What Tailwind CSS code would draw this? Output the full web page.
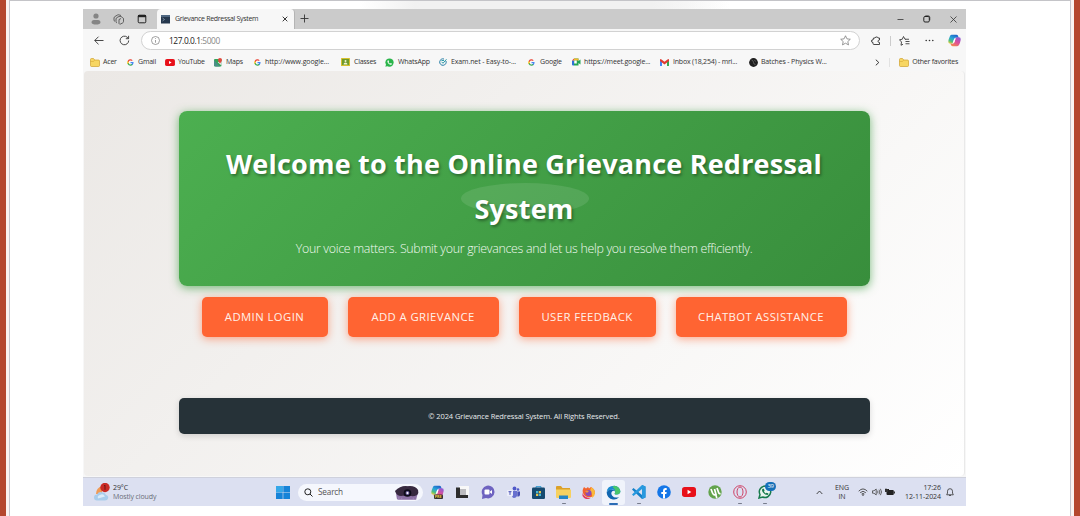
<!DOCTYPE html>
<html lang="en">
<head>
<meta charset="utf-8">
<title>Grievance Redressal System</title>
<script src="https://cdn.jsdelivr.net/npm/@tailwindcss/browser@4"></script>
</head>
<body class="w-[1080px] h-[516px] overflow-hidden bg-white font-['Open_Sans','Noto_Sans',sans-serif] text-[#333]">
<svg class="absolute w-0 h-0">
  <linearGradient id="cool" x1="0.700" y1="0" x2="0.200" y2="1"><stop offset="0" stop-color="#1f63c9"/><stop offset=".45" stop-color="#2aa6d8"/><stop offset=".75" stop-color="#4fbf7d"/><stop offset="1" stop-color="#e8cf3c"/></linearGradient>
  <linearGradient id="warm" x1="0.800" y1="0" x2="0.200" y2="1"><stop offset="0" stop-color="#8d5bd6"/><stop offset=".5" stop-color="#dd4f9b"/><stop offset="1" stop-color="#f58a4a"/></linearGradient>
  <symbol id="g" viewBox="0 0 24 24"><path fill="#4285f4" d="M22.5 12.3c0-.8-.1-1.6-.2-2.3H12v4.3h5.9a5 5 0 0 1-2.2 3.3v2.8h3.6c2-2 3.2-4.800 3.200-8.100z"/><path fill="#34a853" d="M12 23c3 0 5.500-1 7.300-2.700l-3.600-2.800a6.600 6.600 0 0 1-9.900-3.400H2.200v2.800A11 11 0 0 0 12 23z"/><path fill="#fbbc05" d="M5.800 14.100a6.600 6.600 0 0 1 0-4.200V7.100H2.200a11 11 0 0 0 0 9.800z"/><path fill="#ea4335" d="M12 5.400c1.600 0 3.100.6 4.200 1.600l3.200-3.100A11 11 0 0 0 2.200 7.100l3.600 2.800A6.600 6.600 0 0 1 12 5.400z"/></symbol>
  <symbol id="folder" viewBox="0 0 20 18"><path fill="#f7d662" stroke="#d0a02c" stroke-width="1.400" d="M1 3q0-2 2-2h4l2.500 3H17q2 0 2 2v9q0 2-2 2H3q-2 0-2-2z"/><path stroke="#d0a02c" stroke-width="1" fill="none" d="M1 7h6l2.500-3"/></symbol>
  <symbol id="yt" viewBox="0 0 24 17"><rect width="24" height="17" rx="4.500" fill="#e8101a"/><path fill="#fff" d="M9.500 4.800v7.400l6.500-3.700z"/></symbol>
  <symbol id="wa" viewBox="0 0 24 24"><circle cx="12" cy="12" r="11" fill="#2ab54a"/><path fill="#2ab54a" d="M1 23l2-7 5 5z"/><path fill="#fff" d="M8 6c-3 2-1.500 6 1.500 9s7 4 8.500 1.500c.8-1.500-.2-2-2.800-3.200L13.500 15c-2-.8-3.400-2.400-4-4l1.200-1.600C9.800 6.500 9.200 5.500 8 6z"/></symbol>
  <symbol id="copilot" viewBox="0 0 24 24"><path fill="url(#cool)" d="M7 1.500h8.500q2.500 0 3.300 2.500l.9 3H14q-2 0-2.700 2L9 15.500q-.8 2.500-3.500 2.500H4q-4 0-3.500-4.500Q1.500 8 3.500 4 4.500 1.500 7 1.500z"/><path fill="url(#warm)" d="M17 22.500H8.500q-2.500 0-3.300-2.500l-.5-2H8q2.500 0 3.300-2.500L14 8.500Q14.800 6 17.500 6H20q4 0 3.500 4.500-1 5.500-3 9.500-1 2.500-3.500 2.500z"/><path fill="#fff" d="M11.300 9h2.400l-1.900 6.500H9.300z"/></symbol>
</svg>

<div class="relative flex w-[1080px] h-[516px] justify-between">
  <div class="flex w-[10px]"><div class="w-[6px] bg-[#b5472e]"></div><div class="w-[3px] bg-[#fbf3f1]"></div><div class="w-px bg-[#c6c6cc]"></div></div>

  <div class="flex-1 border-t border-[#c4c4c8] pt-2 pl-[73px] bg-white">
    <div class="absolute left-[360px] top-[1px] w-[370px] h-[8px] bg-linear-to-r from-transparent from-0% via-[#f1f1f1] via-15% to-transparent"></div>
    <div class="absolute left-[420px] top-[1px] w-[310px] h-[8px] bg-linear-to-r from-[#f1f1f1] from-75% to-transparent"></div>
    <main class="relative w-[883px] h-[497px] flex flex-col bg-[#f7f7f7]">

      <!-- Tab strip -->
      <div class="flex h-[20px] bg-[#cbcbcb]">
        <div class="flex w-[74px] items-center pl-[8px] gap-[12px]">
          <svg class="w-[10px] h-[12px]" viewBox="0 0 10 12" fill="#858585"><circle cx="5" cy="3" r="2.600"/><path d="M.5 11.500V9.500q0-2.500 2.500-2.500h4q2.500 0 2.500 2.500-.5 2-4.500 2T.5 9.500z"/></svg>
          <svg class="w-[11px] h-[11px]" viewBox="0 0 22 22" fill="none" stroke="#444" stroke-width="1.600" stroke-linejoin="round"><path d="M4 15q-2-1-2-3V8q0-2 2-3l5-3q2-1 4 0l3 1"/><path d="M8 18q-2-1-2-3V10q0-2 2-3l4-2q2-1 4 0l3 2q2 1 2 3v5q0 2-2 3l-4 2q-2 1-3-1v-8l4-2"/></svg>
          <svg class="w-[10px] h-[10px] ml-[1px]" viewBox="0 0 10 10"><rect x="1.200" y="1.200" width="7.600" height="7.600" rx="1" fill="none" stroke="#222" stroke-width="1"/><path d="M1 1h8v2.200H1z" fill="#222"/></svg>
        </div>
        <div class="flex w-[138px] items-center rounded-t-[4px] bg-[#f7f7f7] border-r border-[#b4b4b4] pl-[4px]">
          <svg class="w-[9px] h-[9px]" viewBox="0 0 9 9"><rect width="9" height="8.500" fill="#26384e"/><path d="M0 1h9" stroke="#7896b4"/><path d="M1.500 3l2 1.500-2 1.500" stroke="#9ab" stroke-width=".7" fill="none"/></svg>
          <span class="ml-[5px] w-[107px] text-[7px] tracking-[-0.320px] whitespace-nowrap">Grievance Redressal System</span>
          <svg class="w-[6px] h-[6px]" viewBox="0 0 6 6" stroke="#222" stroke-width=".9"><path d="M.7.7l4.600 4.600M5.300.7L.7 5.300"/></svg>
        </div>
        <svg class="w-[9px] h-[9px] ml-[5px] mt-[5px]" viewBox="0 0 9 9" stroke="#333" stroke-width=".9"><path d="M4.500.5v8M.5 4.500h8"/></svg>
        <div class="ml-auto flex items-center pr-[9px]">
          <svg class="w-[7px] h-[7px]" viewBox="0 0 7 7" stroke="#444" stroke-width=".9"><path d="M.5 3.500h6"/></svg>
          <svg class="w-[8px] h-[8px] ml-[19px]" viewBox="0 0 8 8" stroke="#222" fill="none"><rect x=".8" y="1.500" width="5.500" height="5.500" rx="1.200"/><path d="M2.300.8h3q1.500 0 1.500 1.500v3" stroke-width=".7"/></svg>
          <svg class="w-[7px] h-[7px] ml-[19px]" viewBox="0 0 7 7" stroke="#333" stroke-width=".8"><path d="M.5.5l6 6M6.500.5l-6 6"/></svg>
        </div>
      </div>

      <!-- Address bar -->
      <div class="flex h-[23px] items-center pl-[11px]">
        <svg class="w-[10px] h-[9px]" viewBox="0 0 10 9" stroke="#333" fill="none" stroke-width=".9"><path d="M9.500 4.500H.8M4.500.7L.7 4.500l3.800 3.800"/></svg>
        <svg class="w-[11px] h-[11px] ml-[15px]" viewBox="0 0 11 11" stroke="#333" fill="none" stroke-width=".9"><path d="M9.700 5.500a4.300 4.300 0 1 1-1.500-3.300L9.500 3.500M9.600.8v2.900H6.800"/></svg>
        <div class="ml-[11px] flex h-[19px] w-[719px] items-center rounded-full border border-[#d2d2d2] bg-white pl-[9px] pr-[8px]">
          <svg class="w-[9px] h-[9px]" viewBox="0 0 9 9" fill="none" stroke="#777" stroke-width=".7"><circle cx="4.500" cy="4.500" r="4"/><path d="M4.500 4v2.700M4.500 2.200v.8"/></svg>
          <span class="ml-[9px] pt-px text-[8.400px] tracking-[-0.420px] text-[#222]">127.0.0.1<span class="text-[#888]">:5000</span></span>
          <svg class="ml-auto w-[11px] h-[11px]" viewBox="0 0 22 22" fill="none" stroke="#777" stroke-width="1.500"><path d="M11 1.500l2.900 6.200 6.700.8-5 4.600 1.400 6.700-6-3.400-6 3.400 1.400-6.700-5-4.600 6.700-.8z"/></svg>
        </div>
        <svg class="ml-[11px] w-[10px] h-[10px]" viewBox="0 0 20 20" fill="none" stroke="#333" stroke-width="1.800" stroke-linejoin="round"><path d="M5 4h3q1-3 4-2 2 .5 2 2h3v4q-3 0-3 2.500t3 2.500v4H6q-2 0-2-2v-2q-3 0-3-3t3-2z"/></svg>
        <div class="ml-[9px] w-px h-[10px] bg-[#ccc]"></div>
        <svg class="ml-[8px] w-[11px] h-[10px]" viewBox="0 0 22 20" fill="none" stroke="#333" stroke-width="1.700" stroke-linejoin="round"><path d="M14 6.500h-2L9 1 6.500 6.500l-5.500 1L5 12l-1 6.500 4-2M13 6.500h7M13 11h8M13 15.500h8"/></svg>
        <svg class="ml-[15px] w-[9px] h-[3px]" viewBox="0 0 9 3" fill="#333"><circle cx="1.200" cy="1.500" r=".8"/><circle cx="4.500" cy="1.500" r=".8"/><circle cx="7.800" cy="1.500" r=".8"/></svg>
        <svg class="ml-[14px] w-[13px] h-[13px]"><use href="#copilot"/></svg>
      </div>

      <!-- Favourites bar -->
      <div class="flex h-[19px] items-center pl-[7px] pt-px text-[7px] tracking-[-0.200px] whitespace-nowrap">
        <div class="flex w-[37px] items-center gap-[3px]"><svg class="w-[10px] h-[9px]"><use href="#folder"/></svg><span>Acer</span></div>
        <div class="flex w-[38px] items-center gap-[4px]"><svg class="w-[7px] h-[7px]"><use href="#g"/></svg><span>Gmail</span></div>
        <div class="flex w-[49px] items-center gap-[3px]"><svg class="w-[10px] h-[7px]"><use href="#yt"/></svg><span class="tracking-[-0.300px]">YouTube</span></div>
        <div class="flex w-[40px] items-center gap-[4px]"><svg class="w-[8px] h-[9px]" viewBox="0 0 16 18"><rect y="2" width="15" height="15" rx="2" fill="#35a35a"/><path d="M1 16L13 4l2 2v9L8 9z" fill="#e7ecee"/><path d="M0 4l12 13H4q-4 0-4-4z" fill="#4c8e88"/><path d="M12 0a4 4 0 0 0-4 4q0 2 4 7 4-5 4-7a4 4 0 0 0-4-4z" fill="#df4a3e"/></svg><span>Maps</span></div>
        <div class="flex w-[87px] items-center gap-[4px]"><svg class="w-[7px] h-[7px]"><use href="#g"/></svg><span class="tracking-[-0.090px]">http://www.google...</span></div>
        <div class="flex w-[44px] items-center gap-[4px]"><svg class="w-[9px] h-[8px]" viewBox="0 0 18 16"><rect width="18" height="16" rx="1" fill="#d6c02e"/><rect x="2" y="2" width="14" height="12" fill="#6f9a2c"/><path fill="#f0f3cf" d="M9 4a2 2 0 1 1 0 4 2 2 0 0 1 0-4zM5 13q0-4 4-4t4 4z"/></svg><span class="tracking-[-0.260px]">Classes</span></div>
        <div class="flex w-[54px] items-center gap-[4px]"><svg class="w-[9px] h-[9px]"><use href="#wa"/></svg><span>WhatsApp</span></div>
        <div class="flex w-[89px] items-center gap-[4px]"><svg class="w-[8px] h-[8px]" viewBox="0 0 16 16" fill="none" stroke-width="2"><path stroke="#247ca4" d="M14 6a6.500 6.500 0 1 1-4-4"/><path stroke="#2a9ba8" d="M5 7.500l3 3 7-8M5 5h5"/></svg><span class="tracking-[-0.120px]">Exam.net - Easy-to-...</span></div>
        <div class="flex w-[44px] items-center gap-[5px]"><svg class="w-[7px] h-[7px]"><use href="#g"/></svg><span>Google</span></div>
        <div class="flex w-[88px] items-center gap-[3px]"><svg class="w-[9px] h-[8px]" viewBox="0 0 18 16"><path fill="#23a455" d="M4 1h9v5l4-3v10l-4-3v5H4z"/><path fill="#f4b92c" d="M4 1h9v4H4z"/><path fill="#2d70d8" d="M0 5h4v10H2q-2 0-2-2z"/><path fill="#e44235" d="M0 5l4-4v4z"/><path fill="#fff" d="M4.500 5h5v6h-5z"/></svg><span class="tracking-[-0.160px]">https://meet.google...</span></div>
        <div class="flex w-[89px] items-center gap-[4px]"><svg class="w-[9px] h-[7px]" viewBox="0 0 18 14"><path fill="#4285f4" d="M0 2h4v12H1q-1 0-1-1z"/><path fill="#34a853" d="M14 2h4v11q0 1-1 1h-3z"/><path fill="#e03a32" d="M0 1q1-2 3 0l6 4.500L15 1q2-2 3 0v3L9 11 0 4z"/></svg><span>Inbox (18,254) - mri...</span></div>
        <div class="flex items-center gap-[3px]"><svg class="w-[9px] h-[9px]" viewBox="0 0 18 18"><circle cx="9" cy="9" r="8.800" fill="#202020"/><path d="M5 4q4 1 4 5t4 4M11 4l2 3" stroke="#777" fill="none" stroke-width="1.300"/></svg><span class="tracking-[-0.160px]">Batches - Physics W...</span></div>
        <div class="ml-auto flex items-center pr-[8px]">
          <svg class="w-[5px] h-[7px]" viewBox="0 0 5 7" fill="none" stroke="#222" stroke-width=".9"><path d="M.8.700l3 2.800-3 2.800"/></svg>
          <div class="ml-[9px] mr-[9px] w-px h-[9px] bg-[#e2e2e2]"></div>
          <svg class="w-[10px] h-[9px] mr-[3px]"><use href="#folder"/></svg><span class="tracking-[-0.230px]">Other favorites</span>
        </div>
      </div>

      <!-- Page -->
      <section class="mx-px flex h-[405px] flex-col items-center rounded-[4px] border-r border-[#e9e9e9] bg-linear-135 from-[#ebe8e5] to-[#ffffff] pt-[40px]">
        <header class="relative flex h-[175px] w-[691px] flex-col items-center rounded-[8px] bg-linear-135 from-[#4caf50] to-[#388e3c] pt-[31px] text-center shadow-[0_2px_10px_rgba(67,160,71,0.700)]">
          <div class="absolute left-[282px] top-[72px] h-[31px] w-[128px] rounded-[50%] bg-white/10"></div>
          <h1 class="relative text-[27px] leading-[44.800px] font-bold tracking-[0.210px] text-white [text-shadow:1.500px_1.500px_3px_rgba(0,0,0,0.350)]">Welcome to the Online Grievance Redressal<br>System</h1>
          <p class="relative mt-[7px] text-[12.400px] leading-[20px] font-light tracking-[-0.300px] text-[#f0faf0]">Your voice matters. Submit your grievances and let us help you resolve them efficiently.</p>
        </header>
        <nav class="mt-[11px] flex h-[40px] gap-[20px] text-[11.300px] text-[#fff1e9] tracking-[0.420px] *:pt-px">
          <a class="flex w-[126px] items-center justify-center rounded-[5px] bg-[#ff6432] shadow-[0_2px_8px_rgba(255,87,34,0.500)]">ADMIN LOGIN</a>
          <a class="flex w-[151px] items-center justify-center rounded-[5px] bg-[#ff6432] shadow-[0_2px_8px_rgba(255,87,34,0.500)]">ADD A GRIEVANCE</a>
          <a class="flex w-[137px] items-center justify-center rounded-[5px] bg-[#ff6432] shadow-[0_2px_8px_rgba(255,87,34,0.500)]">USER FEEDBACK</a>
          <a class="flex w-[171px] items-center justify-center rounded-[5px] bg-[#ff6432] shadow-[0_2px_8px_rgba(255,87,34,0.500)]">CHATBOT ASSISTANCE</a>
        </nav>
        <footer class="mt-[61px] flex h-[36px] w-[691px] items-center justify-center rounded-[5px] bg-[#263238] pt-px text-[7.500px] tracking-[-0.110px] text-[#e6eaec] shadow-[0_2px_6px_rgba(0,0,0,0.150)]">© 2024 Grievance Redressal System. All Rights Reserved.</footer>
      </section>

      <!-- Taskbar -->
      <div class="mt-auto flex h-[29px] items-center border-t border-[#cfd1dc] bg-[#dce0f1] text-[7px] text-[#333]">
        <svg class="ml-[11px] w-[17px] h-[19px]" viewBox="0 0 17 19"><path fill="#f09a55" d="M2 11q0-6 6-8v8z"/><path fill="#a9cdec" d="M3 17.500a3 3 0 0 1 0-6q2-3.500 5.500-2Q11 9 12 12q3 1 2 3.500-.5 2-3 2z"/><path fill="#dcecf9" d="M4 15.500q-1-3 2-3.500 3-2 5 1.500z"/><circle cx="11" cy="4.500" r="4.700" fill="#c92a26"/><path d="M10 3l1-.8v4.600" stroke="#6d1512" fill="none"/></svg>
        <div class="ml-[2px] w-[163px] leading-[9.500px] tracking-[-0.120px]"><div>29°C</div><div class="text-[#6a6d78]">Mostly cloudy</div></div>
        <svg class="w-[14px] h-[13px]" viewBox="0 0 14 13"><path fill="#1683d8" d="M0 0h6.700v6.200H0zM7.300 0H14v6.200H7.300zM0 6.800h6.700V13H0zM7.300 6.800H14V13H7.300z"/><path fill="#35a7e8" d="M0 0h6.700v6.200H0z"/></svg>
        <div class="ml-[8px] flex h-[17px] w-[125px] items-center rounded-full bg-[#f5f7fd] pl-[6px] pr-[3px]">
          <svg class="w-[9px] h-[9px]" viewBox="0 0 9 9" fill="none" stroke="#222" stroke-width="1"><circle cx="3.800" cy="3.800" r="3"/><path d="M6 6l2.500 2.500"/></svg>
          <span class="ml-[5px] pt-px text-[8.200px] tracking-[-0.160px] text-[#555]">Search</span>
          <svg class="ml-auto w-[26px] h-[15px]" viewBox="0 0 27 15"><path fill="#8d72a5" d="M3 14L2 8Q5 1 13 1t12 6l-2 8H4z"/><path fill="#37293f" d="M1 6q6-6 13-5 8-1 11 4 1 3-1 5-4 2-7 1H9Q3 12 1 6z"/><circle cx="14" cy="8" r="4" fill="#0f0d1a"/><circle cx="14" cy="8" r="2" fill="#7567a6"/><circle cx="14" cy="8" r="1" fill="#fff"/><path stroke="#b398c8" stroke-width=".6" d="M5 12v3M8 13v2M20 13v2"/></svg>
        </div>
        <div class="ml-[2px] flex h-full items-center">
          <div class="flex w-[25px] justify-center"><svg class="w-[15px] h-[15px]" viewBox="0 0 15 15"><use href="#copilot" x="1" width="13" height="13"/><rect x="4" y="9.500" width="9" height="4.500" rx="1" fill="#333"/><text x="4.700" y="13.200" font-size="3.800" font-weight="bold" fill="#f5c542">PRE</text></svg></div>
          <div class="flex w-[25px] justify-center"><svg class="w-[13px] h-[13px]" viewBox="0 0 13 13"><path fill="#f8f8f8" d="M3 0h10v9H3z"/><path fill="#bcbcc0" d="M4 3h6v6H4z"/><path fill="#2d2d2d" d="M0 1.500h4V9h8v3H0z"/></svg></div>
          <div class="flex w-[25px] justify-center"><svg class="w-[14px] h-[14px]" viewBox="0 0 14 14"><path fill="#6e63c0" d="M1 14l.5-4A6.400 6.400 0 1 1 5 13z"/><rect x="3.500" y="4.500" width="5" height="5" rx="1" fill="#fff"/><path fill="#fff" d="M9 6.500l2-1.500v4L9 7.500z"/></svg></div>
          <div class="flex w-[26px] justify-center"><svg class="w-[13px] h-[13px]" viewBox="0 0 13 13"><circle cx="7.500" cy="2.500" r="1.900" fill="#5059c9"/><circle cx="11" cy="3.500" r="1.300" fill="#5059c9"/><path fill="#6870cf" d="M5 5h5v5q-1 2-3 2t-2-3z"/><path fill="#4850b5" d="M10.300 5.500H13V9q-.5 2-2.700 1.500z"/><rect y="4" width="6" height="6" rx=".8" fill="#eceefa"/><path stroke="#4850b5" fill="none" d="M1.500 5.700h3M3 5.700v3.200"/></svg></div>
          <div class="flex w-[25px] justify-center"><svg class="w-[13px] h-[13px]" viewBox="0 0 13 13"><path d="M4 2V.7h5V2" fill="none" stroke="#2696cf"/><rect y="1.500" width="13" height="11.500" rx="1.200" fill="#164a70"/><path fill="#40b8d8" d="M4 5h2.200v2.200H4zM6.800 7.800H9V10H6.800z"/><path fill="#e5c34d" d="M6.800 5H9v2.200H6.800zM4 7.800h2.200V10H4z"/></svg></div>
          <div class="relative flex h-full w-[25px] items-center justify-center"><svg class="w-[15px] h-[13px]" viewBox="0 0 15 13"><path fill="#dba029" d="M0 1q0-1 1-1h4l1.500 2H14v3H0z"/><path fill="#f7d160" d="M0 3.500h15V11q0 1-1 1H1q-1 0-1-1z"/><path fill="#2685c6" d="M3 9.500h9V13H3z"/></svg><i class="absolute bottom-[2px] left-[11px] h-[1.500px] w-[4px] rounded bg-[#777c8c]"></i></div>
          <div class="flex w-[25px] justify-center"><svg class="w-[13px] h-[13px]" viewBox="0 0 13 13"><path fill="#f2622e" d="M1 3l1-2 2 1.500L6 1l1 1.500L9 1q4 2 4 6A6.300 6.300 0 1 1 1 3z"/><path fill="#fbb83a" d="M9 1q4 2 4 6 0 3-3 5 1-5-3-7 2-1 2-4z"/><circle cx="6.500" cy="7" r="3" fill="#8c4bb5"/><path fill="#e33b60" d="M.500 7q2 5 8 5-5 3-8-2z"/><path fill="#f8943a" d="M3 5q2-1 4 0l-2 2z"/></svg></div>
          <div class="relative flex h-[25px] w-[23px] items-center justify-center rounded-[3px] bg-[#f0f3fb] mx-[1px]"><svg class="w-[15px] h-[15px]" viewBox="0 0 24 24"><path fill="#1166b0" d="M1 12q3-6 9-5 6 1 5 4-2-3-5-1-3 3 0 7 4 5 11 2-4 5-10 4Q2 22 1 12z"/><path fill="#1c8bd0" d="M1 11Q2 1 13 1q9 1 10 9 0 5-6 5-4 0-3-2 2-2 0-4-3-3-8-1-4 1-5 3z"/><path fill="#49c66c" d="M13 1q9 1 10 9 0 5-6 5-4 0-3-2 2-2 0-4 1-3-4-6z"/></svg><i class="absolute bottom-0 left-[7px] h-[2px] w-[9px] rounded bg-[#2b6cb5]"></i></div>
          <div class="relative flex h-full w-[25px] items-center justify-center"><svg class="w-[14px] h-[14px]" viewBox="0 0 14 14"><path fill="#1680c8" d="M10 0l3.500 1.500v11L10 14 1 5.500 0 4.500 1.500 3l8.500 7z"/><path fill="#2899df" d="M10 0l3.500 1.500v11L10 14V4l-8.500 7L0 9.500z"/></svg><i class="absolute bottom-[2px] left-[11px] h-[1.500px] w-[4px] rounded bg-[#777c8c]"></i></div>
          <div class="flex w-[25px] justify-center"><svg class="w-[14px] h-[14px]" viewBox="0 0 14 14"><circle cx="7" cy="7" r="6.800" fill="#1476e8"/><path fill="#fff" d="M6 13.500V9H4.300V7H6V5.500Q6 3 8.300 3h1.400v1.900H8.800q-.8 0-.8.900V7h1.700l-.3 2H8v4.500z"/></svg></div>
          <div class="flex w-[26px] justify-center"><svg class="w-[14px] h-[10px]"><use href="#yt"/></svg></div>
          <div class="flex w-[25px] justify-center"><svg class="w-[14px] h-[14px]" viewBox="0 0 14 14"><circle cx="7" cy="7" r="6.700" fill="#63a34c"/><path fill="none" stroke="#fff" stroke-width="1.700" d="M3 4l1.500 4q1 2.500 3.500 1.500L6.500 4M9 3l1.600 4.500q.5 1.500 2 1M8 9.500q0 2 1 3.500"/></svg></div>
          <div class="relative flex h-full w-[25px] items-center justify-center"><svg class="w-[14px] h-[14px]" viewBox="0 0 14 14" fill="none" stroke="#cf4266" stroke-width="1"><circle cx="7" cy="7" r="6.300"/><ellipse cx="7" cy="7" rx="3" ry="5"/></svg><i class="absolute bottom-[2px] left-[11px] h-[1.500px] w-[4px] rounded bg-[#777c8c]"></i></div>
          <div class="relative flex h-full w-[25px] items-center justify-center"><svg class="w-[14px] h-[14px]" viewBox="0 0 14 14"><path fill="#e9f4ed" stroke="#187b4d" stroke-width="1.500" d="M1 13l1-3.500A5.700 5.700 0 1 1 4.700 12z"/><path fill="#187b4d" d="M5 3.500q-2 1.500 0 4t4.500 2.500q1.500-1 .5-1.700l-1.500-.6-.8.700Q6.500 7.500 6 6.500l.6-.9Q6 3.500 5 3.500z"/></svg><span class="absolute left-[13px] top-[4px] flex h-[9px] w-[11px] items-center justify-center rounded-full bg-[#1670b8] text-[6px] tracking-[-0.400px] text-white">39</span><i class="absolute bottom-[2px] left-[11px] h-[1.500px] w-[4px] rounded bg-[#777c8c]"></i></div>
        </div>
        <div class="ml-auto flex items-center pr-[12px] tracking-[-0.050px]">
          <svg class="w-[7px] h-[5px]" viewBox="0 0 7 5" fill="none" stroke="#333" stroke-width=".9"><path d="M.7 4l2.800-3 2.800 3"/></svg>
          <div class="ml-[11px] w-[16px] text-center leading-[9.500px]">ENG<br>IN</div>
          <svg class="ml-[8px] w-[10px] h-[8px]" viewBox="0 0 10 8" fill="none" stroke="#444" stroke-width=".9"><path d="M.7 3.200q4.300-4.500 8.600 0M2.200 4.700q2.800-2.800 5.600 0M3.600 6.100q1.400-1.300 2.800 0"/><circle cx="5" cy="7" r=".5"/></svg>
          <svg class="ml-[4px] w-[10px] h-[8px]" viewBox="0 0 10 8" fill="none" stroke="#444" stroke-width=".8"><path d="M.5 2.800H2L4.200 1v6L2 5.200H.5zM5.500 2.700q1 1.300 0 2.600M7 1.700q1.700 2.300 0 4.600M8.400.8q2.300 3.200 0 6.400"/></svg>
          <svg class="ml-[3px] w-[10px] h-[8px]" viewBox="0 0 10 8"><rect x="1.500" y="2" width="7.300" height="5" rx="1" fill="#222"/><path d="M9 3.500h1v2H9zM0 1h3v3H0z" fill="#333"/><path d="M3.500 1v2.500M1 .5v1.500" stroke="#222"/></svg>
          <div class="ml-[8px] w-[38px] text-right leading-[9.500px] whitespace-nowrap">17:26<br>12-11-2024</div>
          <svg class="ml-[5px] w-[8px] h-[9px]" viewBox="0 0 8 9" fill="none" stroke="#333" stroke-width=".8"><path d="M.7 6.800L1.500 5V3.200a2.500 2.500 0 0 1 5 0V5l.8 1.800zM3 7q1 1.800 2 0"/></svg>
        </div>
      </div>
    </main>
  </div>

  <div class="flex w-[10px]"><div class="w-px bg-[#c6c6cc]"></div><div class="w-[3px] bg-[#fbf3f1]"></div><div class="w-[6px] bg-[#b5472e]"></div></div>
</div>
</body>
</html>
